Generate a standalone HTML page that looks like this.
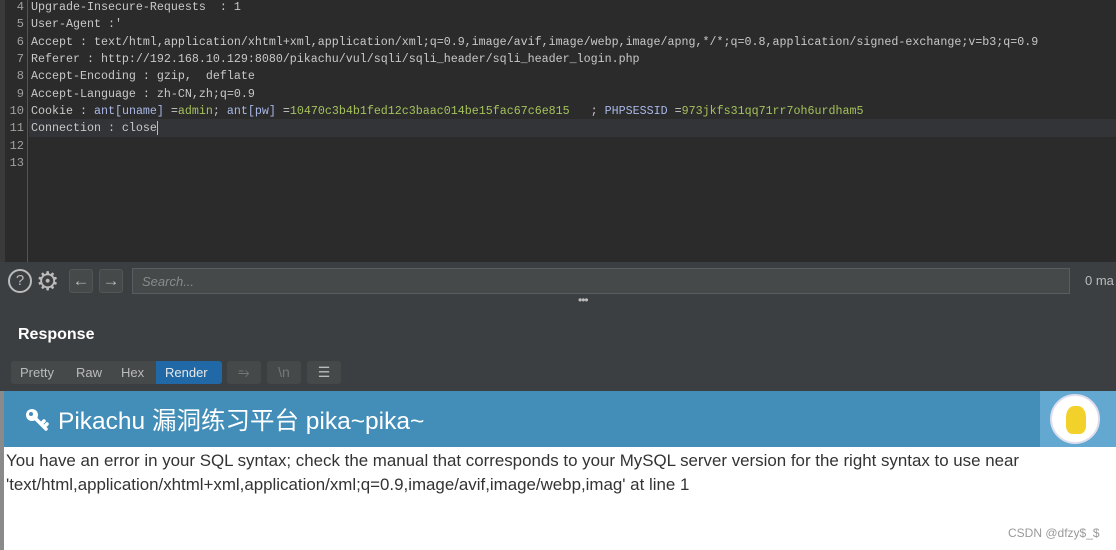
<!DOCTYPE html>
<html><head><meta charset="utf-8"><style>
*{margin:0;padding:0;box-sizing:border-box}
body{width:1116px;height:550px;overflow:hidden;background:#2b2b2b;position:relative;font-family:"Liberation Sans","Noto Sans CJK SC",sans-serif}
.ed{position:absolute;left:0;top:0;width:1116px;height:262px;background:#2b2b2b}
.gut{position:absolute;left:0;top:0;width:28px;height:262px;border-right:1px solid #555;background:#2b2b2b}
.side{position:absolute;left:0;top:0;width:5px;height:262px;background:#3a3a3a}
.ln{position:absolute;left:0;width:24px;text-align:right;color:#a0a0a0;font:12px "Liberation Mono",monospace}
.code{position:absolute;left:31px;white-space:pre;color:#c8c8c8;font:11.67px "Liberation Mono",monospace}
.hl{position:absolute;left:29px;top:119px;width:1087px;height:18px;background:#323437}
.k{color:#a9b7e6}.v{color:#a5c25c}
.low{position:absolute;left:0;top:262px;width:1116px;height:130px;background:#3c3f41}
.ib{position:absolute;top:269px;width:24px;height:24px;border:1px solid #555;border-radius:3px;background:#45494a;color:#bbb;font-size:17px;line-height:21px;text-align:center}
.search{position:absolute;left:132px;top:268px;width:938px;height:26px;border:1px solid #5a5d5f;background:#45494a;color:#8a8a8a;font-style:italic;font-size:13px;padding:5px 9px}
.tabs{position:absolute;left:11px;top:361px;height:23px;width:210px;background:#45494a;border-radius:3px;font-size:13px;color:#bbb}
.tabs span{position:absolute;top:4px}
.tb{position:absolute;top:361px;width:34px;height:23px;background:#45494a;border-radius:3px;color:#777;font-size:14px;text-align:center;line-height:22px}
.rend{position:absolute;left:0;top:391px;width:1116px;height:159px;background:#fff;border-left:4px solid #8a8a8a}
.hdr{position:absolute;left:4px;top:391px;width:1036px;height:56px;background:#438eb9}
.hdr2{position:absolute;left:1040px;top:391px;width:76px;height:56px;background:#62a8d1}
.msg{position:absolute;left:6px;color:#333;font-size:16.9px;white-space:nowrap;font-family:"Liberation Sans","Noto Sans CJK SC",sans-serif}
</style></head><body>
<div class="ed">
<div class="gut"></div><div class="side"></div>
<div class="hl"></div>
<div class="ln" style="top:0">4</div><div class="ln" style="top:17px">5</div><div class="ln" style="top:35px">6</div><div class="ln" style="top:52px">7</div><div class="ln" style="top:69px">8</div><div class="ln" style="top:87px">9</div><div class="ln" style="top:104px">10</div><div class="ln" style="top:121px">11</div><div class="ln" style="top:139px">12</div><div class="ln" style="top:156px">13</div>
<div class="code" style="top:0">Upgrade-Insecure-Requests  : 1</div>
<div class="code" style="top:17px">User-Agent :'</div>
<div class="code" style="top:35px">Accept : text/html,application/xhtml+xml,application/xml;q=0.9,image/avif,image/webp,image/apng,*/*;q=0.8,application/signed-exchange;v=b3;q=0.9</div>
<div class="code" style="top:52px">Referer : http://192.168.10.129:8080/pikachu/vul/sqli/sqli_header/sqli_header_login.php</div>
<div class="code" style="top:69px">Accept-Encoding : gzip,  deflate</div>
<div class="code" style="top:87px">Accept-Language : zh-CN,zh;q=0.9</div>
<div class="code" style="top:104px">Cookie : <span class="k">ant[uname]</span> =<span class="v">admin</span>; <span class="k">ant[pw]</span> =<span class="v">10470c3b4b1fed12c3baac014be15fac67c6e815</span>   ; <span class="k">PHPSESSID</span> =<span class="v">973jkfs31qq71rr7oh6urdham5</span></div>
<div class="code" style="top:121px">Connection : close<span style="border-left:1px solid #bbb"> </span></div>
</div>
<div class="low"></div>
<div style="position:absolute;left:8px;top:269px;width:24px;height:24px;border:2px solid #bbb;border-radius:50%;color:#bbb;font-size:15px;text-align:center;line-height:20px">?</div>
<div style="position:absolute;left:36px;top:266px;color:#bbb;font-size:26px;line-height:30px">⚙</div>
<div class="ib" style="left:69px">←</div>
<div class="ib" style="left:99px">→</div>
<div class="search">Search...</div>
<div style="position:absolute;left:1085px;top:273px;color:#bbb;font-size:13px">0 ma</div>
<div style="position:absolute;left:578px;top:293px;color:#bbb;font-size:12px;letter-spacing:-1px">•••</div>
<div style="position:absolute;left:18px;top:326px;color:#fff;font-weight:bold;font-size:16px">Response</div>
<div class="tabs"><span style="left:9px">Pretty</span><span style="left:65px">Raw</span><span style="left:110px">Hex</span>
<div style="position:absolute;left:145px;top:0;width:66px;height:23px;background:#2169a6;border-radius:0 3px 3px 0;color:#e8e8e8;padding:4px 9px">Render</div></div>
<div class="tb" style="left:227px">⥱</div>
<div class="tb" style="left:267px">\n</div>
<div class="tb" style="left:307px;color:#bbb">☰</div>
<div class="rend"></div>
<div class="hdr">
<svg style="position:absolute;left:20px;top:16px" width="26" height="26" viewBox="0 0 26 26"><circle cx="8" cy="8" r="6" fill="#fff"/><circle cx="7" cy="7" r="2" fill="#438eb9"/><path d="M11 11 L22 22 M17 17 L20 14 M20 20 L23 17" stroke="#fff" stroke-width="3.5" fill="none" stroke-linecap="round"/></svg>
<div style="position:absolute;left:54px;top:11px;color:#fff;font-size:24.5px;font-family:'Liberation Sans','Noto Sans CJK SC',sans-serif">Pikachu 漏洞练习平台 pika~pika~</div></div>
<div class="hdr2"><div style="position:absolute;left:10px;top:3px;width:50px;height:50px;border-radius:50%;background:#fff;border:2px solid #dde"><div style="position:absolute;left:14px;top:10px;width:20px;height:28px;background:#f2d22a;border-radius:40% 40% 30% 30%"></div></div></div>
<div class="msg" style="top:451px">You have an error in your SQL syntax; check the manual that corresponds to your MySQL server version for the right syntax to use near</div>
<div class="msg" style="top:475px">'text/html,application/xhtml+xml,application/xml;q=0.9,image/avif,image/webp,imag' at line 1</div>
<div style="position:absolute;left:1008px;top:526px;color:#999;font-size:12px">CSDN @dfzy$_$</div>
</body></html>
